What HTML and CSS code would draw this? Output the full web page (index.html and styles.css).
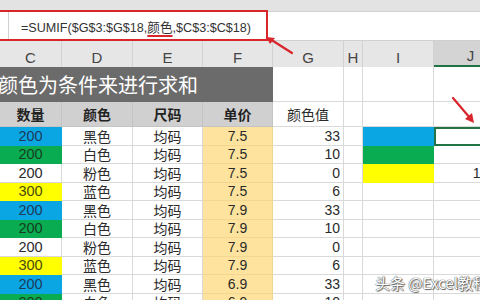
FILE: index.html
```html
<!DOCTYPE html>
<html lang="zh">
<head>
<meta charset="utf-8">
<link rel="stylesheet" href="styles.css">
</head>
<body>
<div class="app">
  <div class="topstrip"></div>
  <div class="fbar">
    <div class="fname"></div>
    <div class="ftext">=SUMIF($G$3:$G$18,<span class="ul">颜色</span>,$C$3:$C$18)</div>
  </div>
  <div class="sheet">
    <div class="ch">C</div><div class="ch">D</div><div class="ch">E</div><div class="ch">F</div><div class="ch">G</div><div class="ch">H</div><div class="ch">I</div><div class="ch sel">J</div>

    <div class="title"><span>颜色为条件来进行求和</span></div><div class="c"></div><div class="c"></div><div class="c"></div><div class="c"></div>

    <div class="c hd">数量</div><div class="c hd">颜色</div><div class="c hd">尺码</div><div class="c hd">单价</div><div class="c hv">颜色值</div><div class="c"></div><div class="c"></div><div class="c"></div>

    <div class="c q blue">200</div><div class="c">黑色</div><div class="c">均码</div><div class="c p">7.5</div><div class="c v">33</div><div class="c"></div><div class="c blue"></div><div class="c j selcell"><span class="faint">600</span></div>
    <div class="c q green">200</div><div class="c">白色</div><div class="c">均码</div><div class="c p">7.5</div><div class="c v">10</div><div class="c"></div><div class="c green"></div><div class="c j"><span class="faint">600</span></div>
    <div class="c q">200</div><div class="c">粉色</div><div class="c">均码</div><div class="c p">7.5</div><div class="c v">0</div><div class="c"></div><div class="c yellow"></div><div class="c j">1200</div>
    <div class="c q yellow">300</div><div class="c">蓝色</div><div class="c">均码</div><div class="c p">7.5</div><div class="c v">6</div><div class="c"></div><div class="c"></div><div class="c"></div>
    <div class="c q blue">200</div><div class="c">黑色</div><div class="c">均码</div><div class="c p">7.9</div><div class="c v">33</div><div class="c"></div><div class="c"></div><div class="c"></div>
    <div class="c q green">200</div><div class="c">白色</div><div class="c">均码</div><div class="c p">7.9</div><div class="c v">10</div><div class="c"></div><div class="c"></div><div class="c"></div>
    <div class="c q">200</div><div class="c">粉色</div><div class="c">均码</div><div class="c p">7.9</div><div class="c v">0</div><div class="c"></div><div class="c"></div><div class="c"></div>
    <div class="c q yellow">300</div><div class="c">蓝色</div><div class="c">均码</div><div class="c p">7.9</div><div class="c v">6</div><div class="c"></div><div class="c"></div><div class="c"></div>
    <div class="c q blue">200</div><div class="c">黑色</div><div class="c">均码</div><div class="c p">6.9</div><div class="c v">33</div><div class="c"></div><div class="c"></div><div class="c"></div>
    <div class="c q green">200</div><div class="c">白色</div><div class="c">均码</div><div class="c p">6.9</div><div class="c v">10</div><div class="c"></div><div class="c"></div><div class="c"></div>
  </div>

  <div class="redbox"></div>
  <svg class="arrows" width="480" height="300" viewBox="0 0 480 300">
    <line x1="292" y1="53" x2="270" y2="39" stroke="#d8262c" stroke-width="2.2" stroke-linecap="round"/>
    <polygon points="266,37 275,38 270,44" fill="#d8262c"/>
    <line x1="453" y1="98" x2="470" y2="118" stroke="#d8262c" stroke-width="2.2" stroke-linecap="round"/>
    <polygon points="474,123 465,119 472,113" fill="#d8262c"/>
  </svg>
  <div class="wm">头条 @Excel教程</div>
</div>
</body>
</html>
```
FILE: styles.css
```css
html, body {
  margin: 0;
  padding: 0;
}
body {
  width: 480px;
  height: 300px;
  overflow: hidden;
  background: #ffffff;
  font-family: "Liberation Sans", "Noto Sans CJK SC", sans-serif;
  color: #222;
}
.app {
  position: relative;
  width: 480px;
  height: 300px;
  overflow: hidden;
  background: #e6e6e6;
}
.topstrip {
  height: 11px;
  background: #e3e3e3;
}
.fbar {
  height: 28px;
  background: #ffffff;
  display: flex;
  align-items: center;
  border-top: 1px solid #d0d0d0;
  border-bottom: 1px solid #d0d0d0;
}
.fname {
  width: 9px;
  height: 100%;
  border-right: 1px solid #d0d0d0;
  box-sizing: border-box;
}
.ftext {
  padding-left: 12px;
  font-family: "Liberation Sans", "Noto Sans CJK SC", sans-serif;
  font-size: 12.6px;
  color: #333;
  white-space: nowrap;
}
.ul {
  text-decoration: underline;
  text-decoration-color: #d8262c;
  text-decoration-thickness: 1.5px;
  text-underline-offset: 3px;
}
.sheet {
  display: grid;
  grid-template-columns: 62px 71px 70px 70px 71px 19px 71px 74px;
  grid-template-rows: 26px 35px 25px repeat(10, 18.5px);
  width: 508px;
  background: #ffffff;
}
.ch {
  background: #e6e6e6;
  border-right: 1px solid #d2d2d2;
  display: flex;
  align-items: flex-end;
  justify-content: center;
  padding-bottom: 1px;
  font-size: 15px;
  color: #444;
  box-sizing: border-box;
}
.ch.sel {
  background: #d4d4d4;
  border-bottom: 2px solid #217346;
}
.title {
  grid-column: 1 / span 4;
  background: #6b6b6b;
  color: #ffffff;
  font-family: "Noto Sans CJK SC", sans-serif;
  font-size: 20px;
  display: flex;
  align-items: center;
  overflow: hidden;
  white-space: nowrap;
}
.title span {
  margin-left: -2px;
}
.c {
  border-right: 1px solid #d9d9d9;
  border-bottom: 1px solid #d9d9d9;
  box-sizing: border-box;
  display: flex;
  align-items: center;
  justify-content: center;
  font-family: "Liberation Sans", "Noto Sans CJK SC", sans-serif;
  font-size: 14px;
  color: #2a2a2a;
  white-space: nowrap;
}
.hd {
  background: #d0d0d0;
  border-color: #c4c4c4;
  font-weight: bold;
  font-size: 14px;
  color: #222;
}
.hv {
  font-size: 14px;
}
.q {
  font-size: 14.5px;
}
.blue {
  background: #0aa6e4;
  border-color: #0aa6e4;
  color: #1d3b5a;
}
.green {
  background: #0aac52;
  border-color: #0aac52;
  color: #163d22;
}
.yellow {
  background: #ffff00;
  border-color: #ffff00;
  color: #4a4a10;
}
.p {
  background: #fde39e;
  border-color: #f3d690;
}
.v {
  justify-content: flex-end;
  padding-right: 3px;
}
.j {
  justify-content: flex-end;
  padding-right: 3px;
}
.selcell {
  border: 2px solid #217346;
}
.faint {
  color: #999;
}
.redbox {
  position: absolute;
  left: 0;
  top: 10px;
  width: 268px;
  height: 31px;
  border: 2px solid #d8262c;
  border-left: none;
  box-sizing: border-box;
}
.arrows {
  position: absolute;
  left: 0;
  top: 0;
}
.wm {
  position: absolute;
  left: 375px;
  top: 272px;
  font-family: "Noto Sans CJK SC", sans-serif;
  font-size: 15px;
  color: #ffffff;
  white-space: nowrap;
  text-shadow: 0 0 1px #555, 0 0 1px #555, 1px 1px 1px #666;
}
```
